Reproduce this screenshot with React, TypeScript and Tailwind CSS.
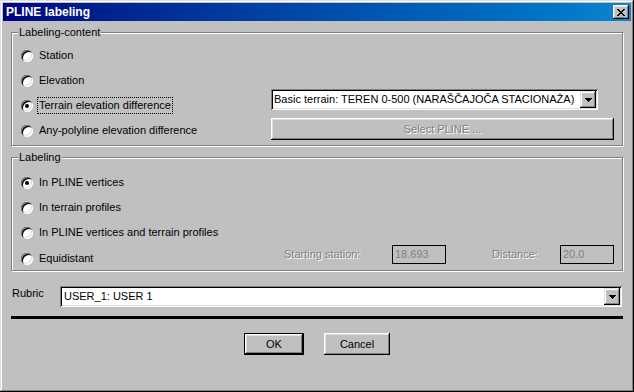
type RadioProps = { label: string; checked?: boolean; focused?: boolean };

function Radio({ label, checked = false, focused = false }: RadioProps) {
  return (
    <div className="flex h-[25px] items-center">
      <span className="flex h-[12px] w-[12px] shrink-0 items-center justify-center rounded-full bg-white shadow-[inset_1px_1px_#808080,inset_-1px_-1px_#fff,inset_2px_2px_#000,inset_-2px_-2px_#dfdfdf]">
        {checked && <span className="h-[4px] w-[4px] rounded-full bg-black" />}
      </span>
      <span
        className={`ml-[4px] border px-[1px] leading-[15px] ${
          focused ? "border-dotted border-black" : "border-transparent"
        }`}
      >
        {label}
      </span>
    </div>
  );
}

function Group({ title, children }: { title: string; children: React.ReactNode }) {
  return (
    <div className="relative h-[114px] border border-[#808080] shadow-[inset_1px_1px_#fff,1px_1px_#fff]">
      <span className="absolute -top-[8px] left-[6px] bg-[#c0c0c0] px-[1px] leading-[14px]">{title}</span>
      {children}
    </div>
  );
}

function Arrow() {
  return (
    <svg width="7" height="4" viewBox="0 0 7 4" shapeRendering="crispEdges">
      <rect x="0" y="0" width="7" height="1" fill="#000" />
      <rect x="1" y="1" width="5" height="1" fill="#000" />
      <rect x="2" y="2" width="3" height="1" fill="#000" />
      <rect x="3" y="3" width="1" height="1" fill="#000" />
    </svg>
  );
}

function Combo({ value, className = "" }: { value: string; className?: string }) {
  return (
    <div
      className={`flex h-[21px] bg-white p-[2px] shadow-[inset_1px_1px_#808080,inset_-1px_-1px_#fff,inset_2px_2px_#000,inset_-2px_-2px_#dfdfdf] ${className}`}
    >
      <span className="flex-1 truncate pl-[1px] leading-[17px]">{value}</span>
      <span className="flex w-[16px] items-center justify-center bg-[#c0c0c0] shadow-[inset_-1px_-1px_#000,inset_1px_1px_#dfdfdf,inset_-2px_-2px_#808080,inset_2px_2px_#fff]">
        <Arrow />
      </span>
    </div>
  );
}

function CloseGlyph() {
  const px = [
    [0, 0], [1, 0], [6, 0], [7, 0],
    [1, 1], [2, 1], [5, 1], [6, 1],
    [2, 2], [3, 2], [4, 2], [5, 2],
    [3, 3], [4, 3],
    [2, 4], [3, 4], [4, 4], [5, 4],
    [1, 5], [2, 5], [5, 5], [6, 5],
    [0, 6], [1, 6], [6, 6], [7, 6],
  ];
  return (
    <svg width="8" height="7" viewBox="0 0 8 7" shapeRendering="crispEdges">
      {px.map(([x, y]) => (
        <rect key={`${x}-${y}`} x={x} y={y} width="1" height="1" fill="#000" />
      ))}
    </svg>
  );
}

export default function App() {
  return (
    <div className="flex h-[392px] w-[634px] flex-col bg-[#c0c0c0] p-[3px] font-['Liberation_Sans',Arial,sans-serif] text-[11px] text-black shadow-[inset_-1px_-1px_#000,inset_1px_1px_#dfdfdf,inset_-2px_-2px_#808080,inset_2px_2px_#fff]">
      {/* title bar */}
      <div className="flex h-[18px] items-center bg-linear-to-r from-[#000080] to-[#1084d0] pl-[3px] pr-[2px]">
        <span className="text-[12px] font-bold leading-[18px] text-white">PLINE labeling</span>
        <span className="ml-auto flex h-[14px] w-[16px] items-center justify-center bg-[#c0c0c0] shadow-[inset_-1px_-1px_#000,inset_1px_1px_#fff,inset_-2px_-2px_#808080,inset_2px_2px_#dfdfdf]">
          <CloseGlyph />
        </span>
      </div>

      <div className="flex flex-col px-[8px]">
        <div className="mt-[11px]">
          <Group title="Labeling-content">
            <div className="flex pr-[8px]">
              <div className="flex w-[259px] flex-col pl-[9px] pt-[10px]">
                <Radio label="Station" />
                <Radio label="Elevation" />
                <Radio label="Terrain elevation difference" checked focused />
                <Radio label="Any-polyline elevation difference" />
              </div>
              <div className="flex w-[343px] flex-col pt-[56px]">
                <Combo value="Basic terrain: TEREN 0-500 (NARAŠČAJOČA STACIONAŽA)" className="w-[327px]" />
                <div className="mt-[8px] flex h-[22px] items-center justify-center shadow-[inset_-1px_-1px_#000,inset_1px_1px_#fff,inset_-2px_-2px_#808080,inset_2px_2px_#dfdfdf]">
                  <span className="text-[#808080] [text-shadow:1px_1px_#fff]">Select PLINE ...</span>
                </div>
              </div>
            </div>
          </Group>
        </div>

        <div className="mt-[11px]">
          <Group title="Labeling">
            <div className="flex flex-col pl-[9px] pr-[8px] pt-[12px]">
              <Radio label="In PLINE vertices" checked />
              <Radio label="In terrain profiles" />
              <Radio label="In PLINE vertices and terrain profiles" />
              <div className="flex items-center">
                <Radio label="Equidistant" />
                <div className="mb-[8px] ml-auto flex items-center text-[#808080] [text-shadow:1px_1px_#fff]">
                  <span className="w-[108px]">Starting station:</span>
                  <span className="h-[19px] w-[54px] border border-black pl-[2px] leading-[17px] [text-shadow:none]">18.693</span>
                  <span className="ml-[46px] w-[68px]">Distance:</span>
                  <span className="h-[19px] w-[54px] border border-black pl-[2px] leading-[17px] [text-shadow:none]">20.0</span>
                </div>
              </div>
            </div>
          </Group>
        </div>

        <div className="mt-[15px] flex items-start">
          <span className="w-[49px] pl-[1px] leading-[14px]">Rubric</span>
          <Combo value="USER_1: USER 1" className="mr-[1px] flex-1 [&>span:first-child]:pl-[2px]" />
        </div>

        <div className="mt-[9px] h-[3px] bg-black" />

        <div className="mt-[14px] flex justify-center gap-[20px]">
          <div className="h-[22px] w-[60px] border border-black">
            <div className="flex h-full items-center justify-center shadow-[inset_-1px_-1px_#000,inset_1px_1px_#fff,inset_-2px_-2px_#808080,inset_2px_2px_#dfdfdf]">
              OK
            </div>
          </div>
          <div className="flex h-[22px] w-[66px] items-center justify-center shadow-[inset_-1px_-1px_#000,inset_1px_1px_#fff,inset_-2px_-2px_#808080,inset_2px_2px_#dfdfdf]">
            Cancel
          </div>
        </div>
      </div>
    </div>
  );
}
